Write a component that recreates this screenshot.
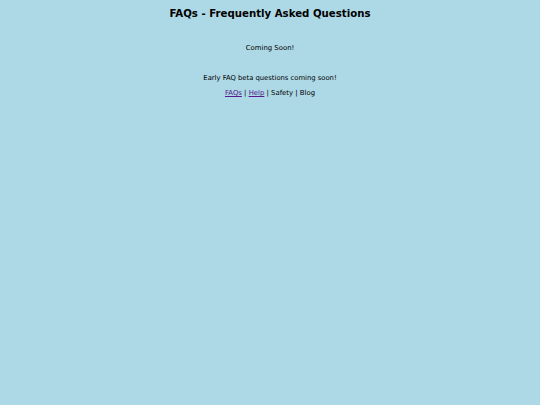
export default function App() {
  return (
    <div
      className="min-h-[405px] bg-[#add8e6] text-black text-center pt-[8px]"
      style={{ fontFamily: '"DejaVu Sans", Verdana, sans-serif' }}
    >
      <h1 className="text-[10.2px] font-bold leading-[12px]">FAQs - Frequently Asked Questions</h1>
      <p className="text-[6.9px] leading-[9px] mt-[24px]">Coming Soon!</p>
      <p className="text-[6.8px] leading-[9px] mt-[21px]">Early FAQ beta questions coming soon!</p>
      <p className="text-[6.9px] leading-[9px] mt-[6px]">
        <a href="#" className="underline text-[#551a8b]">FAQs</a> |{' '}
        <a href="#" className="underline text-[#551a8b]">Help</a> | Safety | Blog
      </p>
    </div>
  );
}
